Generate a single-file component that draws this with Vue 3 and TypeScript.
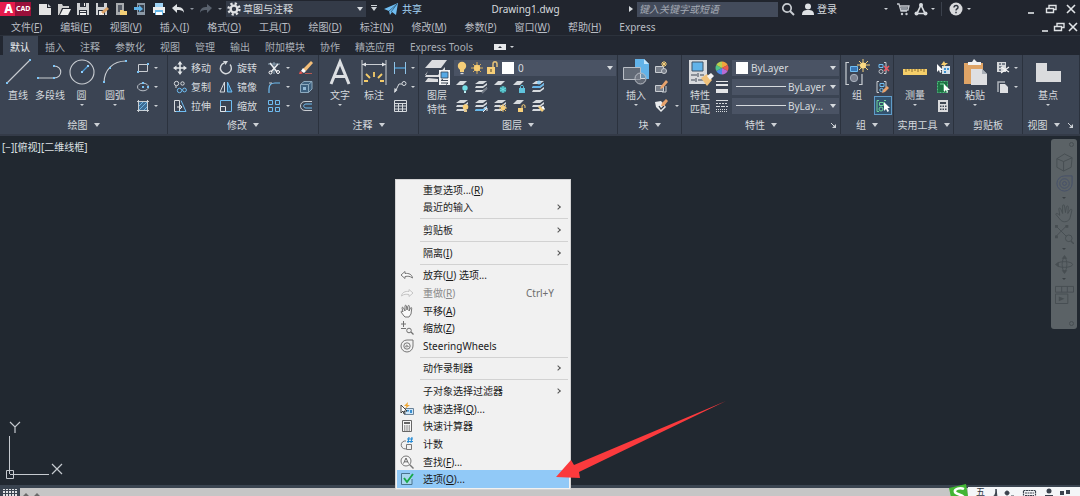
<script setup lang="ts">
import { h, ref } from 'vue'

interface MenuName { label: string; key?: string }
interface ContextItem {
  label?: string
  key?: string
  after?: string
  icon?: string
  sub?: boolean
  shortcut?: string
  disabled?: boolean
  active?: boolean
  sep?: boolean
}

const Ic = (props: { n: string }) =>
  h('svg', { class: 'ic', 'aria-hidden': 'true' }, [h('use', { href: '#i-' + props.n })])
Ic.props = ['n']

const menus: MenuName[] = [
  { label: '文件', key: 'F' }, { label: '编辑', key: 'E' }, { label: '视图', key: 'V' },
  { label: '插入', key: 'I' }, { label: '格式', key: 'O' }, { label: '工具', key: 'T' },
  { label: '绘图', key: 'D' }, { label: '标注', key: 'N' }, { label: '修改', key: 'M' },
  { label: '参数', key: 'P' }, { label: '窗口', key: 'W' }, { label: '帮助', key: 'H' },
  { label: 'Express' },
]
const tabs = ['默认', '插入', '注释', '参数化', '视图', '管理', '输出', '附加模块', '协作', '精选应用', 'Express Tools']
const activeTab = ref('默认')
const keyword = ref('')

const quick = [
  { n: 'new', t: '新建' }, { n: 'open', t: '打开' }, { n: 'save', t: '保存' }, { n: 'saveas', t: '另存为' },
  { n: 'webopen', t: '从 Web 打开' }, { n: 'websave', t: '保存到 Web' }, { n: 'print', t: '打印' },
]
const layerTools = ['layoff', 'layiso', 'layfrz', 'laylck', 'laycur', 'layon', 'layuniso', 'laythw', 'layulk', 'laymch']

const items: ContextItem[] = [
  { label: '重复选项...', key: 'R' },
  { label: '最近的输入', sub: true },
  { sep: true },
  { label: '剪贴板', sub: true },
  { sep: true },
  { label: '隔离', key: 'I', sub: true },
  { sep: true },
  { label: '放弃', key: 'U', after: ' 选项...', icon: 'm-undo' },
  { label: '重做', key: 'R', icon: 'm-redo', shortcut: 'Ctrl+Y', disabled: true },
  { label: '平移', key: 'A', icon: 'm-pan' },
  { label: '缩放', key: 'Z', icon: 'm-zoom' },
  { label: 'SteeringWheels', icon: 'm-wheel' },
  { sep: true },
  { label: '动作录制器', sub: true },
  { sep: true },
  { label: '子对象选择过滤器', sub: true },
  { label: '快速选择', key: 'Q', after: '...', icon: 'm-qsel' },
  { label: '快速计算器', icon: 'm-calc' },
  { label: '计数', icon: 'm-count' },
  { label: '查找', key: 'F', after: '...', icon: 'm-find' },
  { label: '选项', key: 'O', after: '...', icon: 'm-opt', active: true },
]
</script>

<template>
  <div class="cad">
    <svg class="sprite" aria-hidden="true">
      <symbol id="i-new" viewBox="0 0 14 14"><path d="M1 2h8v4h4v7H1z" fill="#e4e4e4" /><path d="M10 2l3 3h-3z" fill="#c9cdd2" /></symbol>
      <symbol id="i-open" viewBox="0 0 14 14"><path d="M1 13V2h4l1 2h6v2H5l-3 7z" fill="#cfcfcf" /><path d="M6 7h8l-3 6H3z" fill="#eee" /></symbol>
      <symbol id="i-save" viewBox="0 0 14 14"><path d="M1 1h12v12H1z" fill="#cfd1d4" /><path d="M4 1h6v4H4zM3 8h8v5H3z" fill="#2b303a" /><path d="M8 1h1v3H8zM4 9h6v1H4zM4 11h6v2H4z" fill="#f0f0f0" /></symbol>
      <symbol id="i-saveas" viewBox="0 0 14 14"><path d="M1 1h11v12H1z" fill="#cfd1d4" /><path d="M3 1h6v4H3zM3 8h7v5H3z" fill="#2b303a" /><path d="M4 9h5v4H4z" fill="#eee" /><path d="M5 13l1-3 6-5 2 2-6 5z" fill="#dca368" /><path d="M5 13l1-3 2 2z" fill="#fff" /></symbol>
      <symbol id="i-webopen" viewBox="0 0 14 14"><path d="M2 1h8v12H2z" fill="#a9acb0" /><path d="M4 3h4v7H4z" fill="#555b66" /><path d="M6 8h3l1 1h3v4H6z" fill="#f3cf77" /></symbol>
      <symbol id="i-websave" viewBox="0 0 14 14"><path d="M4 1h8v12H4z" fill="#8b98a5" /><path d="M5 3h6v7H5z" fill="#38414e" /><path d="M1 5h5V3l4 4-4 3V8H1z" fill="#5fb3ea" /></symbol>
      <symbol id="i-print" viewBox="0 0 14 14"><path d="M3 1h8v4H3z" fill="#9fd3f5" /><path d="M1 5h12v6H1z" fill="#eee" /><path d="M3 8h8v5H3z" fill="#67b7e8" /><path d="M4 10h6v3H4z" fill="#fff" /></symbol>
      <symbol id="i-undo" viewBox="0 0 14 14"><path d="M1 6l5-4v3c4 0 7 1 7 6-1-3-4-3-7-3v3z" fill="#dfe2e5" /></symbol>
      <symbol id="i-redo" viewBox="0 0 14 14"><path d="M13 6L8 2v3c-4 0-7 1-7 6 1-3 4-3 7-3v3z" fill="#59616d" /></symbol>
      <symbol id="i-gear" viewBox="0 0 14 14"><circle cx="7" cy="7" r="5.500" fill="none" stroke="#e0e2e5" stroke-width="2.400" stroke-dasharray="2.200 2.120" /><circle cx="7" cy="7" r="3.400" fill="none" stroke="#e0e2e5" stroke-width="2.400" /></symbol>
      <symbol id="i-plane" viewBox="0 0 14 14"><path d="M0 7L14 1l-2 12-4-3-2 3-1-4z" fill="#6fbdf2" /><path d="M5 9l8-7-6 8" fill="none" stroke="#2a5878" stroke-width=".8" /></symbol>
      <symbol id="i-search" viewBox="0 0 14 14"><circle cx="6" cy="6" r="4.200" fill="none" stroke="#c9cdd2" stroke-width="1.700" /><path d="M9 9l4 4" stroke="#c9cdd2" stroke-width="2" /></symbol>
      <symbol id="i-user" viewBox="0 0 14 14"><circle cx="7" cy="4.500" r="3" fill="#dfe2e5" /><path d="M1 13c0-4 2-5 6-5s6 1 6 5z" fill="#dfe2e5" /></symbol>
      <symbol id="i-cart" viewBox="0 0 14 14"><path d="M1 2h2l2 7h6M4 4h9l-1 4H5" fill="none" stroke="#c5c9cf" stroke-width="1.300" /><path d="M5 5h7l-1 3H5z" fill="#8c929b" /><circle cx="6" cy="12" r="1.200" fill="#c5c9cf" /><circle cx="10.500" cy="12" r="1.200" fill="#c5c9cf" /></symbol>
      <symbol id="i-adsk" viewBox="0 0 14 14"><path d="M7 3L3 11.500h8z" fill="none" stroke="#d6dade" stroke-width="1.700" /><circle cx="7" cy="3" r="2" fill="#d6dade" /><circle cx="2.500" cy="11.500" r="2" fill="#d6dade" /><circle cx="11.500" cy="11.500" r="2" fill="#d6dade" /></symbol>
      <symbol id="i-help" viewBox="0 0 14 14"><circle cx="7" cy="7" r="6.500" fill="#d9dadd" /><path d="M5 5.500c0-3 4.500-2.500 4 0C8.700 7 7 6.800 7 8.500M7 9.800v1.500" fill="none" stroke="#2c323c" stroke-width="1.400" /></symbol>
      <symbol id="i-min" viewBox="0 0 12 12"><path d="M3 10h6" stroke="#e2e5e8" stroke-width="1.600" /></symbol>
      <symbol id="i-restore" viewBox="0 0 12 12"><path d="M1.500 5.500h7v4h-7zM4 5V2.500h7v4H9" fill="none" stroke="#dfe2e5" stroke-width="1.400" /></symbol>
      <symbol id="i-close" viewBox="0 0 12 12"><path d="M2 2l8 8M10 2l-8 8" stroke="#e2e5e8" stroke-width="1.600" /></symbol>

      <symbol id="i-line" viewBox="0 0 28 28"><path d="M3 25L26 2" stroke="#c9cdd2" stroke-width="1.100" /><path d="M2 24h2v2H2zM25 1h2v2h-2z" fill="#7cc4f5" /></symbol>
      <symbol id="i-pline" viewBox="0 0 28 28"><path d="M2 20h16c9 0 9-12 0-12" fill="none" stroke="#c9cdd2" stroke-width="1.100" /><path d="M1 19h2v2H1zM17 19h2v2h-2zM17 7h2v2h-2z" fill="#7cc4f5" /></symbol>
      <symbol id="i-circle" viewBox="0 0 28 28"><circle cx="14" cy="14" r="12" fill="none" stroke="#c9cdd2" stroke-width="1.100" /><path d="M14 14l6-6" stroke="#4b9ad6" stroke-width="1.300" /><path d="M13 13h2v2h-2zM19 7h2v2h-2z" fill="#8fd0ff" /></symbol>
      <symbol id="i-arc" viewBox="0 0 28 28"><path d="M3 25C3 12 12 3 25 3" fill="none" stroke="#c9cdd2" stroke-width="1.100" /><path d="M2 23h2v2H2zM8 9h2v2H8zM24 2h2v2h-2z" fill="#7cc4f5" /></symbol>
      <symbol id="i-rect" viewBox="0 0 14 14"><path d="M2.500 3.500h9v7h-9z" fill="none" stroke="#c9cdd2" /><path d="M1 10h2v2H1zM11 2h2v2h-2z" fill="#7cc4f5" /></symbol>
      <symbol id="i-ellipse" viewBox="0 0 14 14"><ellipse cx="7" cy="7" rx="5.500" ry="3.800" fill="none" stroke="#b9bfc7" /><path d="M6 6h2v2H6zM6 2h2v2H6zM11 6h2v2h-2z" fill="#7cc4f5" /></symbol>
      <symbol id="i-hatch" viewBox="0 0 14 14"><path d="M3 3h9v9H3z" fill="#3c6c94" /><path d="M3 7l4-4M3 11l8-8M7 12l5-5" stroke="#7cc4f5" stroke-width=".800" /><path d="M1 2.500h12M1 11.500h12M2.500 1v12M11.500 1v12" stroke="#d6dade" stroke-width=".900" /></symbol>
      <symbol id="i-move" viewBox="0 0 14 14"><path d="M7 2v10M2 7h10" stroke="#e4e7ea" stroke-width="1.500" /><path d="M7 0l2.500 3.500h-5zM7 14l2.500-3.500h-5zM0 7l3.500-2.500v5zM14 7l-3.500-2.500v5z" fill="#e4e7ea" /></symbol>
      <symbol id="i-copy" viewBox="0 0 14 14"><circle cx="3.500" cy="3.500" r="2.200" fill="none" stroke="#d6dade" /><circle cx="9.500" cy="3.500" r="1.700" fill="none" stroke="#d6dade" /><circle cx="6.500" cy="10.500" r="2.200" fill="none" stroke="#6fbdf2" /><circle cx="11.500" cy="10" r="1.900" fill="none" stroke="#6fbdf2" /><path d="M3 6v2" stroke="#d6dade" /></symbol>
      <symbol id="i-stretch" viewBox="0 0 14 14"><path d="M1.500 1.500h5v11h-5z" fill="none" stroke="#d6dade" /><path d="M8 1.500l5 11H3" fill="none" stroke="#6fbdf2" /><path d="M4 8h5M7 6l2 2-2 2" fill="none" stroke="#e9ecef" /></symbol>
      <symbol id="i-rotate" viewBox="0 0 14 14"><path d="M5 2a5.500 5.500 0 1 0 6 1.500" fill="none" stroke="#d6dade" stroke-width="1.400" /><path d="M4 0h5L6.500 4z" fill="#d6dade" /></symbol>
      <symbol id="i-mirror" viewBox="0 0 14 14"><path d="M5.500 2v10H1z" fill="none" stroke="#d6dade" /><path d="M8.500 2v10H13z" fill="#2f6f9d" stroke="#6fbdf2" /></symbol>
      <symbol id="i-scale" viewBox="0 0 14 14"><path d="M1.500 1.500h11v11h-11z" fill="none" stroke="#6fbdf2" /><path d="M1.500 7.500h5v5h-5z" fill="none" stroke="#e0e3e6" /></symbol>
      <symbol id="i-trim" viewBox="0 0 14 14"><path d="M1 3h12M7 1v12" stroke="#8ba2b5" /><path d="M3 2l7 9M11 3L4 11" stroke="#e9ecef" stroke-width="1.500" /><circle cx="3.500" cy="11.500" r="1.500" fill="none" stroke="#fff" /><circle cx="11" cy="11" r="1.500" fill="none" stroke="#fff" /></symbol>
      <symbol id="i-fillet" viewBox="0 0 14 14"><path d="M2 13V9c0-4 2-6 6-6h5" fill="none" stroke="#6fbdf2" stroke-width="1.200" /><path d="M2 3h3" stroke="#c9cdd2" /></symbol>
      <symbol id="i-array" viewBox="0 0 14 14"><path d="M1.500 1.500h4v4h-4zM8.500 1.500h4v4h-4zM1.500 8.500h4v4h-4zM8.500 8.500h4v4h-4z" fill="none" stroke="#6fbdf2" /></symbol>
      <symbol id="i-erase" viewBox="0 0 14 14"><path d="M12 0l2 2-7 8-3-2z" fill="#f2bd78" /><path d="M4 7l3 3-2 2-3-2z" fill="#fff" /><path d="M1 10l3 2-2 1H0z" fill="#e5534e" /><path d="M6 12.500h7" stroke="#b65952" /></symbol>
      <symbol id="i-explode" viewBox="0 0 14 14"><path d="M1.500 4.500h8v8h-8zM1.500 4.500L5 1.500h8v7.500l-3.500 3.500M9.500 4.500L13 1.500" fill="#3d607e" stroke="#8da9be" /><path d="M4 7h3v3H4z" fill="#91b8d6" /></symbol>
      <symbol id="i-offset" viewBox="0 0 14 14"><path d="M13 2.500H6c-6 0-6 9 0 9h7" fill="none" stroke="#c9cdd2" /><path d="M13 5H7C4 5 4 9 7 9h6" fill="none" stroke="#6fbdf2" /></symbol>
      <symbol id="i-text" viewBox="0 0 28 28"><path d="M5 26L14 4l9 22M8 18.500h12" fill="none" stroke="#dcdfe2" stroke-width="3" /></symbol>
      <symbol id="i-dim" viewBox="0 0 28 28"><path d="M2 2v25M26 2v25M2 6.500h24" stroke="#c9cdd2" fill="none" /><path d="M2 6.500l4-2v4zM26 6.500l-4-2v4z" fill="#dfe2e5" /><path d="M14 19v-5M10 20l-4-4M18 20l4-4M8 23H4M20 23h4" stroke="#f5cc69" stroke-width="1.800" /></symbol>
      <symbol id="i-dimlin" viewBox="0 0 14 14"><path d="M1.500 1v12M12.500 1v12" stroke="#8fc4e8" /><path d="M2 7h10" stroke="#4f9cd3" stroke-width="1.400" /></symbol>
      <symbol id="i-leader" viewBox="0 0 14 14"><circle cx="11" cy="3.500" r="2" fill="none" stroke="#d6dade" /><path d="M9 4H6l-4 8" fill="none" stroke="#d6dade" /><path d="M1 13l.5-5 3 2z" fill="#d6dade" /></symbol>
      <symbol id="i-table" viewBox="0 0 14 14"><path d="M1.500 1.500h12v11h-12zM1.500 4.500h12M1.500 7h12M1.500 10h12M5.500 4v9M9.500 4v9" fill="none" stroke="#d6dade" /></symbol>
      <symbol id="i-layers" viewBox="0 0 28 28"><path d="M9 2h15l-6 8H2zM5 13l-3 4h13l7-8v3l-6 7H2zM5 20l-3 4h13v-3z" fill="#dcdde0" /><path d="M16 12h11v15H16z" fill="#f0f2f4" /><path d="M18 14h7v6h-7z" fill="#55a9e5" stroke="#33485c" stroke-width=".8" /><path d="M18 22.500h7M18 25h7M20 21l-2 1.500M23 26.500l2-1.500" stroke="#3b4654" /></symbol>
      <symbol id="i-bulb" viewBox="0 0 14 14"><circle cx="7" cy="5" r="4.200" fill="#f7cf79" /><path d="M5 8h4v3H5z" fill="#f7cf79" /><path d="M5.500 12.500h3" stroke="#d7d9dc" stroke-width="1.300" /></symbol>
      <symbol id="i-sun" viewBox="0 0 14 14"><path d="M7 1v12M1 7h12M3 3l8 8M11 3l-8 8" stroke="#e4b65b" stroke-width=".900" /><circle cx="7" cy="7" r="3.200" fill="#f8ce73" /></symbol>
      <symbol id="i-unlock" viewBox="0 0 14 14"><path d="M2 6h8v7H2z" fill="#f7cf79" /><path d="M8 6V3c0-3 4-3 4 0v3" fill="none" stroke="#e3c078" stroke-width="1.500" /><path d="M6 8v3" stroke="#49412e" /></symbol>
      <symbol id="i-sheet" viewBox="0 0 14 14"><path d="M5 1h7L8 5H1z" fill="#d6dade" /></symbol>
      <symbol id="i-sheets" viewBox="0 0 14 14"><path d="M5 1h8L9 4H1zM2 6h7l4-3v2L9 8H1zM2 10h7l4-3v2l-4 3H1z" fill="#d6dade" /></symbol>
      <symbol id="i-layoff" viewBox="0 0 14 14"><use href="#i-sheet" /><circle cx="10" cy="8" r="2.700" fill="#72dde5" /><path d="M9 11h2v2H9z" fill="#bdeef0" /></symbol>
      <symbol id="i-layiso" viewBox="0 0 14 14"><use href="#i-sheets" /><path d="M8 13l5-5" stroke="#6d7581" stroke-width="2" /></symbol>
      <symbol id="i-layfrz" viewBox="0 0 14 14"><use href="#i-sheet" /><circle cx="10" cy="9.500" r="3.300" fill="#3f9fa8" /><path d="M10 6v7M7 8l6 3M13 8l-6 3" stroke="#6fe0e6" stroke-width=".9" /></symbol>
      <symbol id="i-laylck" viewBox="0 0 14 14"><use href="#i-sheet" /><path d="M7 8h6v5H7z" fill="#5fc3dd" /><path d="M8.500 8V6.500c0-1.500 3-1.500 3 0V8" fill="none" stroke="#5fc3dd" /></symbol>
      <symbol id="i-laycur" viewBox="0 0 14 14"><use href="#i-sheets" /><path d="M2 6h7l4-3v2L9 8H1z" fill="#65b6ea" /><circle cx="8" cy="2.500" r="2" fill="#8fcdf3" /></symbol>
      <symbol id="i-layon" viewBox="0 0 14 14"><use href="#i-sheets" /><circle cx="10.500" cy="8" r="2.800" fill="#f7cf79" /><path d="M9 11h3v2H9z" fill="#e5c98f" /></symbol>
      <symbol id="i-layuniso" viewBox="0 0 14 14"><use href="#i-sheets" /><path d="M2 10h7l4-3v2l-4 3H1z" fill="#65b6ea" /><path d="M9 13l4-4M10 9h3v3" stroke="#f0f2f4" fill="none" /></symbol>
      <symbol id="i-laythw" viewBox="0 0 14 14"><use href="#i-sheets" /><path d="M10 5v8M6 9h8M7 6l6 6M13 6l-6 6" stroke="#e4b65b" /><circle cx="10" cy="9" r="2.300" fill="#f7cf79" /></symbol>
      <symbol id="i-layulk" viewBox="0 0 14 14"><use href="#i-sheet" /><path d="M6 9h5v4H6z" fill="#f7cf79" /><path d="M10 9V7c0-1.800 3-1.800 3 0v2" fill="none" stroke="#f7cf79" /></symbol>
      <symbol id="i-laymch" viewBox="0 0 14 14"><use href="#i-sheets" /><path d="M7 8l2-1 4 4-2 2z" fill="#f7cf79" /><path d="M10 8l2-1 2 3-1 1z" fill="#fff" /></symbol>
      <symbol id="i-insert" viewBox="0 0 28 28"><path d="M13 1h9l5 5v15H13z" fill="#62b3e9" /><path d="M22 1v5h5z" fill="#c4e5fb" /><path d="M1.500 9.500h17v12h-17z" fill="#626a76" stroke="#b9bec5" /><circle cx="18.500" cy="20.500" r="5.500" fill="#7b818a" fill-opacity=".6" stroke="#b9bec5" /><path d="M18.500 20.500V16M18.500 20.500H23" stroke="#d2d5d9" /></symbol>
      <symbol id="i-bcreate" viewBox="0 0 14 14"><path d="M1.500 5.500h8v6h-8z" fill="#777e89" stroke="#c9cdd2" /><circle cx="10" cy="10" r="2.500" fill="#777e89" stroke="#c9cdd2" /><path d="M10 0v6M7 3h6M8 1l4 4M12 1L8 5" stroke="#f7cf79" /></symbol>
      <symbol id="i-bedit" viewBox="0 0 14 14"><path d="M1.500 5.500h8v6h-8z" fill="#777e89" stroke="#c9cdd2" /><path d="M12 6v6H8" fill="none" stroke="#c9cdd2" /><path d="M6 9l1-3 5-6 2 2-5 6z" fill="#e8a36c" /></symbol>
      <symbol id="i-battr" viewBox="0 0 14 14"><path d="M1 3l6-1 5 6-5 5-5-5z" fill="#e9ebed" /><path d="M5 7l2 3 3-3" stroke="#333b48" fill="none" stroke-width="1.300" /><path d="M7 7l1-3 4-4 2 2-4 5z" fill="#e8a36c" /></symbol>
      <symbol id="i-match" viewBox="0 0 28 28"><path d="M3 2h18v24H3z" fill="#d8dadd" /><path d="M6 4h11v9H6z" fill="#62b3e9" stroke="#3c5368" /><path d="M5 17h6M14 17h4M5 22h4M12 22h6" stroke="#3c4654" stroke-width="1.200" /><path d="M12 15v4M10 20v4" stroke="#3c4654" /><path d="M15 20l6-4 5 6-5 6z" fill="#f0c27b" /><path d="M21 18l4-3 3 3-4 4z" fill="#f2f2f2" /></symbol>
      <symbol id="i-wheel" viewBox="0 0 14 14"><path d="M7 7V.500A6.500 6.500 0 0 1 12.700 4z" fill="#f1a43c" /><path d="M7 7l5.700-3a6.500 6.500 0 0 1 0 6z" fill="#ea5b4f" /><path d="M7 7l5.700 3A6.500 6.500 0 0 1 7 13.500z" fill="#b76bd5" /><path d="M7 7v6.500A6.500 6.500 0 0 1 1.300 10z" fill="#4a8ae6" /><path d="M7 7l-5.700 3a6.500 6.500 0 0 1 0-6z" fill="#51c38a" /><path d="M7 7L1.300 4A6.500 6.500 0 0 1 7 .500z" fill="#b9d04f" /></symbol>
      <symbol id="i-weight" viewBox="0 0 14 14"><path d="M1 1h12v1H1zM1 4h12v2H1zM1 9h12v4H1z" fill="#e4e6e8" /></symbol>
      <symbol id="i-ltype" viewBox="0 0 14 14"><path d="M1 1.500h12" stroke="#d6dade" /><path d="M1 4.500h12" stroke="#d6dade" stroke-dasharray="2 1" /><path d="M1 7.500h12" stroke="#d6dade" stroke-dasharray="4 1" /><path d="M1 10.500h12M1 12.500h12" stroke="#d6dade" stroke-dasharray="1 1" /></symbol>
      <symbol id="i-group" viewBox="0 0 28 28"><path d="M6 4.500H3v22h3M16 26.500h3V16" fill="none" stroke="#c9cdd2" stroke-width="1.200" /><path d="M7.500 8.500h7v5h-7z" fill="#3a77b5" stroke="#6fbdf2" /><circle cx="11" cy="20" r="3.700" fill="#7b818f" stroke="#a8b0bc" /><path d="M20 1v13M14 7h13M16 3l9 9M25 3l-9 9" stroke="#f7cf79" /><circle cx="20" cy="7.500" r="3" fill="#fbd983" /></symbol>
      <symbol id="i-ungroup" viewBox="0 0 14 14"><path d="M8 1.500h2v11H8" fill="none" stroke="#c9cdd2" /><path d="M3 3.500h4v3H3z" fill="none" stroke="#6fbdf2" /><circle cx="5" cy="10.500" r="2" fill="none" stroke="#b9bec5" /><path d="M8 5l5 5M13 5l-5 5" stroke="#ee5862" stroke-width="1.500" /></symbol>
      <symbol id="i-gedit" viewBox="0 0 14 14"><path d="M3 1.500H1v11h2M8 1.500h2v6" fill="none" stroke="#c9cdd2" /><path d="M4 3.500h4v3H4z" fill="none" stroke="#6fbdf2" /><circle cx="5.500" cy="10" r="1.700" fill="none" stroke="#6fbdf2" /><path d="M6 13l1-3 4-4 2 2-4 4z" fill="#e8a36c" /></symbol>
      <symbol id="i-gsel" viewBox="0 0 14 14"><path d="M3 1.500H1v11h2M8 1.500h2" fill="none" stroke="#6fd39a" /><path d="M3.500 3.500h4v3h-4z" fill="none" stroke="#6fd39a" /><circle cx="5" cy="10" r="2" fill="none" stroke="#6fd39a" /><path d="M8 3v9l2-2 1.500 3 1.500-1-1.500-3H14z" fill="#fff" /></symbol>
      <symbol id="i-measure" viewBox="0 0 28 28"><path d="M2 11h24v6H2z" fill="#f6cf69" /><path d="M5 11v3M8 11v2M11 11v3M14 11v2M17 11v3M20 11v2M23 11v3" stroke="#8d6f30" /></symbol>
      <symbol id="i-qsel" viewBox="0 0 14 14"><path d="M6 5h8v8H6z" fill="#d7e2eb" /><path d="M8 7h2v2H8zM11 7h2v2h-2zM8 10h2v2H8z" fill="#3b91cf" /><path d="M8 0l-3 4h3L6 7l6-5H9z" fill="#f8cf70" /><path d="M1 3v8l2-2 1 3 1.500-1-1-2H7z" fill="#fff" /></symbol>
      <symbol id="i-selall" viewBox="0 0 14 14"><path d="M1.500 1.500h10v11h-10z" fill="#1e7143" stroke="#49c77c" stroke-dasharray="2 1" /><path d="M4 4h4v7" fill="none" stroke="#76dda0" /><path d="M8 4v8l2-2 1 3 1-1-1-2h3z" fill="#fff" /></symbol>
      <symbol id="i-calc" viewBox="0 0 14 14"><path d="M2 1h10v12H2z" fill="#d9dadc" /><path d="M4 3h6v2H4zM4 6.500h1.500V8H4zM6.500 6.500H8V8H6.500zM9 6.500h1.500V8H9zM4 9.500h1.500V11H4zM6.500 9.500H8V11H6.500zM9 9.500h1.500V11H9z" fill="#3f4752" /></symbol>
      <symbol id="i-paste" viewBox="0 0 28 28"><path d="M3 5h19v21H3z" fill="#dfa466" /><path d="M7 7V4h4l2-3 3 3h4v3z" fill="#f2f2f2" /><path d="M10 11h11l5 5v11H10z" fill="#dedfe2" /><path d="M21 11v5h5z" fill="#a9afb8" /></symbol>
      <symbol id="i-cut" viewBox="0 0 14 14"><path d="M1 1h9v10H1z" fill="#d6d8db" /><path d="M3 3h2M6 3h3M3 6h3M3 9h2" stroke="#566070" stroke-width="1.300" /><path d="M5 6l8 5M13 6l-8 6" stroke="#f5f5f5" stroke-width="1.200" /></symbol>
      <symbol id="i-dup" viewBox="0 0 14 14"><path d="M2 12V2h7" fill="none" stroke="#aeb3bb" stroke-width="1.500" /><path d="M4 4h5l3 3v6H4z" fill="#dfe0e3" /></symbol>
      <symbol id="i-base" viewBox="0 0 28 28"><path d="M2 5h11v8h14v11H2z" fill="#dadbdd" /></symbol>
      <symbol id="i-launch" viewBox="0 0 8 8"><path d="M1 2l4 4" stroke="#cdd1d6" /><path d="M6 3v4H2z" fill="#cdd1d6" /></symbol>

      <symbol id="i-m-undo" viewBox="0 0 14 14"><path d="M1 7l4-3.500v2c4-.5 7 1 7.500 4.500C10 8 8 8 5 8.500v2z" fill="#fafafa" stroke="#777" /></symbol>
      <symbol id="i-m-redo" viewBox="0 0 14 14"><path d="M13 7L9 3.500v2C5 5 2 6.500 1.500 10 4 8 6 8 9 8.500v2z" fill="#f6f6f6" stroke="#c5c5c5" /></symbol>
      <symbol id="i-m-pan" viewBox="0 0 14 14"><path d="M4 12L1 8c0-1 1-1 2 0L2 4c0-1 1-1 1.500 0L5 7V2c0-1 1.200-1 1.400 0L7 6l1-4c.3-1 1.500-.500 1.400.500L9 7l1.500-3c.5-1 1.500-.300 1.200.700L11 10l-2 3H5z" fill="#fafafa" stroke="#666" stroke-width=".900" /></symbol>
      <symbol id="i-m-zoom" viewBox="0 0 14 14"><path d="M3.500 0v6M1 3h5M1 7.500h5" stroke="#707070" /><circle cx="9" cy="9.500" r="2.300" fill="none" stroke="#707070" /><path d="M11 11l2.500 2.500" stroke="#707070" stroke-width="1.300" /></symbol>
      <symbol id="i-m-wheel" viewBox="0 0 14 14"><path d="M7 1h6v6a6 6 0 1 1-6-6z" fill="none" stroke="#777" /><circle cx="7" cy="7" r="3.200" fill="none" stroke="#777" /><path d="M5.500 8l1-2 2 1.500z" fill="none" stroke="#777" stroke-width=".800" /></symbol>
      <symbol id="i-m-qsel" viewBox="0 0 14 14"><path d="M4.500 6.500h9v6h-9z" fill="#cfe6f8" stroke="#6a8298" /><path d="M6 8h3v1.500H6zM10 8h2v3h-2z" fill="#3a8fd0" /><path d="M8 0L4 4h2.500L5 7l5-4H7.500z" fill="#efa735" /><path d="M1 3v8l2-2 1 3 1.200-.5-1-2.500H7z" fill="#fff" stroke="#333" stroke-width=".900" /></symbol>
      <symbol id="i-m-calc" viewBox="0 0 14 14"><path d="M2.500 1.500h9v11h-9z" fill="#f7f7f7" stroke="#666" /><path d="M4 3h6v2H4z" fill="#666" /><path d="M4 7h6M4 9h6M4 11h6" stroke="#555" stroke-width="1.200" stroke-dasharray="1.400 .900" /></symbol>
      <symbol id="i-m-count" viewBox="0 0 14 14"><path d="M6 4a4 4 0 1 0 1 7.500M6.500 7.500h5v5h-5z" fill="none" stroke="#777" /><path d="M9 0L8 6M12 0l-1 6M7 2h6M7 4.500h6" stroke="#258bd5" stroke-width="1.100" /></symbol>
      <symbol id="i-m-find" viewBox="0 0 14 14"><circle cx="6" cy="6" r="5" fill="#f7f7f7" stroke="#777" /><path d="M9.500 9.500l4 4" stroke="#777" stroke-width="1.400" /><path d="M3.500 8.500L6 3l2.500 5.500M4.500 6.800h3" fill="none" stroke="#666" /></symbol>
      <symbol id="i-m-opt" viewBox="0 0 14 14"><path d="M12 7v5.500H1.500v-11H10" fill="#a9d6ee" stroke="#49738c" /><path d="M4 6l3 4 6-8" fill="none" stroke="#19a84a" stroke-width="1.900" /></symbol>

      <symbol id="i-cube" viewBox="0 0 20 20"><path d="M10 1l8 4-1 10-8 4-7-4V6zM2 6l7 3 9-4M9 9v10" fill="none" stroke="#474e52" /></symbol>
      <symbol id="i-nwheel" viewBox="0 0 20 20"><path d="M10 2h8v8a8 8 0 1 1-8-8z" fill="none" stroke="#465069" /><circle cx="10" cy="10" r="5" fill="none" stroke="#465069" /><circle cx="10" cy="10" r="2" fill="none" stroke="#465069" /></symbol>
      <symbol id="i-nhand" viewBox="0 0 20 20"><path d="M6 17L1 11c0-2 2-1 4 1L4 5c0-1 1.500-1 2 0l2 5V2c0-1.500 2-1.500 2 0l1 7 1-6c.5-1.500 2-1 2 0l-.5 7L16 6c.8-1 2-.5 1.700 1L16 14c-1 5-7 6-10 3z" fill="none" stroke="#474e52" /></symbol>
      <symbol id="i-nzoom" viewBox="0 0 20 20"><path d="M1 1l11 11M12 1L1 12" stroke="#474e52" /><path d="M0 0h3v3H0zM11 0h3v3h-3zM0 11h3v3H0z" fill="#474e52" /><circle cx="14.500" cy="14" r="3.500" fill="none" stroke="#474e52" /><path d="M17 17l3 3" stroke="#474e52" stroke-width="1.500" /></symbol>
      <symbol id="i-norbit" viewBox="0 0 20 20"><ellipse cx="10" cy="10" rx="8.500" ry="3" fill="none" stroke="#474e52" /><ellipse cx="10" cy="10" rx="2.500" ry="7" fill="none" stroke="#474e52" /><path d="M10 0l3 4H7zM10 20l3-4H7zM0 10l4-3v6z" fill="#474e52" /></symbol>
      <symbol id="i-nmotion" viewBox="0 0 20 20"><path d="M.500 1.500h19v6H.500zM7 1.500v6M13 1.500v6M.500 9.500h13v10H.500z" fill="none" stroke="#474e52" /><path d="M4 12l6 2.500L4 17z" fill="#474e52" /></symbol>
    </svg>

    <header class="title">
      <button class="logo" aria-label="AutoCAD"><b>A</b><span>CAD</span></button>
      <div class="quick">
        <button v-for="q in quick" :key="q.n" :aria-label="q.t"><Ic :n="q.n" /></button>
      </div>
      <div class="history">
        <button aria-label="放弃"><Ic n="undo" /></button><i class="caret dim" />
        <button aria-label="重做"><Ic n="redo" /></button><i class="caret dim" />
      </div>
      <label class="workspace drop">
        <Ic n="gear" />
        <select aria-label="工作空间"><option>草图与注释</option></select>
      </label>
      <button class="custom" aria-label="自定义快速访问工具栏"><i class="caret wide" /></button>
      <button class="share"><Ic n="plane" />共享</button>
      <h1>Drawing1.dwg</h1>
      <div class="finder">
        <i class="arrow-right" />
        <input v-model="keyword" type="text" aria-label="搜索" placeholder="键入关键字或短语">
        <button aria-label="搜索"><Ic n="search" /></button>
      </div>
      <button class="login"><Ic n="user" />登录<i class="caret" /></button>
      <div class="services">
        <button aria-label="应用商店"><Ic n="cart" /></button>
        <button aria-label="Autodesk"><Ic n="adsk" /><i class="caret" /></button>
        <button class="help" aria-label="帮助"><Ic n="help" /><i class="caret" /></button>
      </div>
      <div class="win">
        <button aria-label="最小化"><Ic n="min" /></button>
        <button aria-label="还原"><Ic n="restore" /></button>
        <button aria-label="关闭"><Ic n="close" /></button>
      </div>
    </header>

    <nav class="menus" aria-label="菜单栏">
      <button v-for="m in menus" :key="m.label">{{ m.label }}<template v-if="m.key">(<u>{{ m.key }}</u>)</template></button>
      <div class="win doc">
        <button aria-label="最小化图形"><Ic n="min" /></button>
        <button aria-label="还原图形"><Ic n="restore" /></button>
        <button aria-label="关闭图形"><Ic n="close" /></button>
      </div>
    </nav>

    <nav class="tabs" aria-label="功能区">
      <button v-for="t in tabs" :key="t" :class="{ on: t === activeTab }" @click="activeTab = t">{{ t }}</button>
      <button class="fold" aria-label="最小化功能区"><span class="chip"><i /></span><i class="caret" /></button>
    </nav>

    <section class="ribbon">
      <div class="panel">
        <div class="tools draw">
          <button class="big"><Ic n="line" />直线</button>
          <button class="big"><Ic n="pline" />多段线</button>
          <button class="big"><Ic n="circle" />圆<i class="caret" /></button>
          <button class="big"><Ic n="arc" />圆弧<i class="caret" /></button>
          <div class="stack">
            <button aria-label="矩形"><Ic n="rect" /><i class="caret" /></button>
            <button aria-label="椭圆"><Ic n="ellipse" /><i class="caret" /></button>
            <button aria-label="图案填充"><Ic n="hatch" /><i class="caret" /></button>
          </div>
        </div>
        <button class="name">绘图<i class="caret wide" /></button>
      </div>

      <div class="panel">
        <div class="tools modify">
          <div class="stack">
            <button><Ic n="move" />移动</button>
            <button><Ic n="copy" />复制</button>
            <button><Ic n="stretch" />拉伸</button>
          </div>
          <div class="stack">
            <button><Ic n="rotate" />旋转</button>
            <button><Ic n="mirror" />镜像</button>
            <button><Ic n="scale" />缩放</button>
          </div>
          <div class="stack">
            <button aria-label="修剪"><Ic n="trim" /><i class="caret" /></button>
            <button aria-label="圆角"><Ic n="fillet" /><i class="caret" /></button>
            <button aria-label="阵列"><Ic n="array" /><i class="caret" /></button>
          </div>
          <div class="stack">
            <button aria-label="删除"><Ic n="erase" /></button>
            <button aria-label="分解"><Ic n="explode" /></button>
            <button aria-label="偏移"><Ic n="offset" /></button>
          </div>
        </div>
        <button class="name">修改<i class="caret wide" /></button>
      </div>

      <div class="panel">
        <div class="tools note">
          <button class="big"><Ic n="text" />文字<i class="caret" /></button>
          <button class="big"><Ic n="dim" />标注</button>
          <div class="stack">
            <button aria-label="线性"><Ic n="dimlin" /><i class="caret" /></button>
            <button aria-label="引线"><Ic n="leader" /><i class="caret" /></button>
            <button aria-label="表格"><Ic n="table" /></button>
          </div>
        </div>
        <button class="name">注释<i class="caret wide" /></button>
      </div>

      <div class="panel">
        <div class="tools layer">
          <button class="big"><Ic n="layers" />图层<br>特性</button>
          <div class="stack">
            <label class="drop field"><Ic n="bulb" /><Ic n="sun" /><Ic n="unlock" /><span class="swatch" />
              <select aria-label="图层"><option>0</option></select>
            </label>
            <div class="grid5">
              <button v-for="l in layerTools" :key="l" :aria-label="l"><Ic :n="l" /></button>
            </div>
          </div>
        </div>
        <button class="name">图层<i class="caret wide" /></button>
      </div>

      <div class="panel">
        <div class="tools block">
          <button class="big"><Ic n="insert" />插入<i class="caret" /></button>
          <div class="stack">
            <button aria-label="创建"><Ic n="bcreate" /></button>
            <button aria-label="编辑"><Ic n="bedit" /></button>
            <button aria-label="编辑属性"><Ic n="battr" /><i class="caret" /></button>
          </div>
        </div>
        <button class="name">块<i class="caret wide" /></button>
      </div>

      <div class="panel">
        <div class="tools props">
          <button class="big"><Ic n="match" />特性<br>匹配</button>
          <div class="stack">
            <div class="prop"><Ic n="wheel" /><label class="drop field"><span class="swatch" /><select aria-label="对象颜色"><option>ByLayer</option></select></label></div>
            <div class="prop"><Ic n="weight" /><label class="drop field"><span class="rule" /><select aria-label="线宽"><option>ByLayer</option></select></label></div>
            <div class="prop"><Ic n="ltype" /><label class="drop field"><span class="rule" /><select aria-label="线型"><option>ByLay...</option></select></label></div>
          </div>
        </div>
        <button class="name">特性<i class="caret wide" /></button>
        <button class="launch" aria-label="特性选项板"><Ic n="launch" /></button>
      </div>

      <div class="panel">
        <div class="tools group">
          <button class="big"><Ic n="group" />组</button>
          <div class="stack">
            <button aria-label="解除编组"><Ic n="ungroup" /></button>
            <button aria-label="组编辑"><Ic n="gedit" /></button>
            <button class="pressed" aria-label="启用组选择" aria-pressed="true"><Ic n="gsel" /></button>
          </div>
        </div>
        <button class="name">组<i class="caret wide" /></button>
      </div>

      <div class="panel">
        <div class="tools util">
          <button class="big"><Ic n="measure" />测量<i class="caret" /></button>
          <div class="stack">
            <button aria-label="快速选择"><Ic n="qsel" /></button>
            <button aria-label="全部选择"><Ic n="selall" /></button>
            <button aria-label="快速计算器"><Ic n="calc" /></button>
          </div>
        </div>
        <button class="name">实用工具<i class="caret wide" /></button>
      </div>

      <div class="panel">
        <div class="tools clip">
          <button class="big"><Ic n="paste" />粘贴<i class="caret" /></button>
          <div class="stack">
            <button aria-label="剪切"><Ic n="cut" /><i class="caret" /></button>
            <button aria-label="复制剪裁"><Ic n="dup" /><i class="caret" /></button>
          </div>
        </div>
        <button class="name">剪贴板</button>
      </div>

      <div class="panel">
        <div class="tools view">
          <button class="big"><Ic n="base" />基点<i class="caret" /></button>
        </div>
        <div class="names">
          <button class="name">视图<i class="caret wide" /></button>
          <button aria-label="视图选项"><Ic n="launch" /></button>
        </div>
      </div>
    </section>

    <main class="canvas">
      <div class="viewlabel"><button>[−]</button><button>[俯视]</button><button>[二维线框]</button></div>
      <aside class="navbar" aria-label="导航栏">
        <span class="dot" />
        <button aria-label="ViewCube"><Ic n="cube" /></button>
        <button aria-label="控制盘"><Ic n="nwheel" /><i class="caret" /></button>
        <button aria-label="平移"><Ic n="nhand" /></button>
        <button aria-label="范围缩放"><Ic n="nzoom" /><i class="caret" /></button>
        <button aria-label="动态观察"><Ic n="norbit" /><i class="caret" /></button>
        <button aria-label="ShowMotion"><Ic n="nmotion" /></button>
        <span class="dot end" />
      </aside>
      <svg class="ucs" width="66" height="62" viewBox="0 0 66 62" aria-hidden="true">
        <path d="M6.500 17v38M7 55.500h39M3.500 51.500h7v8h-7z" fill="none" stroke="#c6cacf" />
        <path d="M7 3l5 5 5-5M12 8v6M49 45l10 10M59 45L49 55" fill="none" stroke="#c6cacf" stroke-width="1.200" />
      </svg>
    </main>

    <footer class="command">
      <span class="grip" />
      <input type="text" aria-label="命令行">
      <svg class="marks" width="24" height="8" viewBox="0 0 24 8" aria-hidden="true"><path d="M3 8l3-3 3 3zM14 8l3-3 3 3z" fill="#6a6a6a" /></svg>
    </footer>

    <div class="ime" aria-label="输入法">
      <svg class="sogou" width="22" height="18" viewBox="0 0 22 18" aria-hidden="true">
        <path d="M1 4l17-4 3 18H4z" fill="#43b534" />
        <path d="M16 5C12 3 6 5 7 8s9 2 9 6-6 4-9 3" fill="none" stroke="#fff" stroke-width="2.500" />
      </svg>
      <span>五</span>
      <svg width="92" height="12" viewBox="0 0 92 12" aria-hidden="true">
        <path d="M11 2c0 6-2 8-5 8h6zM22 4a2 2 0 1 0 .1 0M26 9h3" fill="#3b424d" stroke="#3b424d" />
        <path d="M38.500 3.500h12v8h-12zM40 6h9M40 8.500h9" fill="none" stroke="#3b424d" stroke-width="1.200" stroke-dasharray="2 .500" />
        <circle cx="64" cy="4" r="2.500" fill="#3b424d" /><path d="M60 8h8v4h-8z" fill="#3b424d" />
        <path d="M75 4h4v4h-4zM81 3h4v4h-4zM75 10h4v2h-4zM81 9h4v3h-4z" fill="#3b424d" />
      </svg>
    </div>

    <div class="context" role="menu">
      <template v-for="(it, i) in items" :key="i">
        <hr v-if="it.sep">
        <button v-else role="menuitem" :class="{ active: it.active }" :disabled="it.disabled">
          <span class="gutter"><Ic v-if="it.icon" :n="it.icon" /></span>
          <span class="text">{{ it.label }}<template v-if="it.key">(<u>{{ it.key }}</u>)</template>{{ it.after }}</span>
          <span v-if="it.shortcut" class="short">{{ it.shortcut }}</span>
          <i v-if="it.sub" class="chev" />
        </button>
      </template>
    </div>

    <svg class="pointer" width="174" height="92" viewBox="0 0 174 92" aria-hidden="true">
      <path d="M1 78L16 61l3 5L171 2 24 73l1 6z" fill="#fb3a3d" />
    </svg>
  </div>
</template>

<style>
html,
body {
  height: 100%;
  overflow: hidden;
  background: #212830;
}
</style>

<style scoped>
.cad {
  position: relative;
  display: flex;
  flex-direction: column;
  height: 100vh;
  overflow: hidden;
  background: #212830;
  color: #d6dade;
  font: 10px/14px "Noto Sans", "Noto Sans CJK SC", sans-serif;
}
.cad * { box-sizing: border-box; }
.sprite { position: absolute; width: 0; height: 0; }
button, input, select {
  margin: 0;
  padding: 0;
  border: 0;
  background: none;
  color: inherit;
  font: inherit;
}
button { white-space: nowrap; }
.ic { display: block; width: 14px; height: 14px; flex: none; }
u { text-underline-offset: 1px; }

.caret {
  flex: none;
  border: 2px solid transparent;
  border-top-color: #cdd1d6;
  border-bottom: 0;
}
.caret.wide { border-width: 4px 3px 0; }
.caret.dim { border-top-color: #8d949d; }

/* title bar */
.title {
  display: flex;
  align-items: center;
  flex: none;
  height: 18px;
  background: #21252e;
}
.logo {
  display: flex;
  align-items: center;
  height: 14px;
  width: 31px;
  background: #99103a;
  color: #fff;
  font-size: 7px;
  font-weight: 700;
}
.logo b {
  width: 15px;
  margin-right: 1px;
  background: #e51b4c;
  font-size: 12px;
  text-align: right;
  padding-right: 2px;
}
.quick { display: flex; gap: 5px; margin-left: 7px; }
.history { display: flex; align-items: center; gap: 5px; margin: 0 4px 0 5px; }
.drop { position: relative; display: flex; align-items: center; background: #4a5364; }
.drop::after {
  content: "";
  margin-right: 3px;
  border: 3px solid transparent;
  border-top: 4px solid #d6dade;
  border-bottom: 0;
}
.drop select { appearance: none; flex: 1; min-width: 0; width: 0; outline: 0; line-height: 14px; }
.workspace { width: 140px; height: 16px; padding-left: 1px; gap: 2px; background: #343b48; }
.custom { display: flex; justify-content: center; width: 16px; }
.custom .caret { position: relative; }
.custom .caret::before {
  content: "";
  position: absolute;
  left: -3px;
  top: -6px;
  width: 6px;
  height: 1px;
  background: #cdd1d6;
}
.share { display: flex; align-items: center; gap: 4px; padding-left: 2px; color: #a4d4f5; }
h1 { flex: 1; margin: 0; text-align: center; font-size: 10px; font-weight: 400; }
.finder { display: flex; align-items: center; }
.arrow-right { border: 3px solid transparent; border-left: 4px solid #d6dade; border-right: 0; margin-right: 4px; }
.finder input { width: 141px; height: 15px; padding-left: 2px; background: #434b5b; outline: 0; }
.finder input::placeholder { color: #a3a9b3; font-style: italic; opacity: 1; }
.finder .ic { margin-left: 3px; }
.login { display: flex; align-items: center; gap: 2px; margin-left: 6px; }
.login .caret { margin-left: 45px; }
.services { display: flex; align-items: center; gap: 4px; margin-left: 8px; }
.services button { display: flex; align-items: center; gap: 3px; }
.services .help { margin-left: 2px; padding-left: 7px; border-left: 1px solid #3b414c; gap: 4px; }
.win { display: flex; gap: 8px; margin: 0 3px 0 54px; }
.win .ic { width: 12px; height: 12px; }

/* menu bar and tabs */
.menus { display: flex; align-items: center; flex: none; gap: 18px; height: 18px; padding-left: 11px; background: #21252e; color: #b9bdc4; border-bottom: 1px solid #2c323c; }
.win.doc { gap: 2px; margin: 0 1px 0 auto; }
.tabs { display: flex; flex: none; height: 19px; padding-left: 3px; background: #222731; color: #a9afb7; }
.tabs button { padding: 2px 8px 0 7px; }
.tabs .on { background: #3b4453; color: #eef0f2; }
.tabs .fold { display: flex; align-items: center; gap: 4px; margin-left: 6px; }
.chip { display: flex; align-items: center; justify-content: center; width: 12px; height: 6px; background: #e6e8ea; }
.chip i { border: 2px solid transparent; border-top: 0; border-bottom-color: #2c323c; }

/* ribbon */
.ribbon {
  display: grid;
  grid-template-columns: 168fr 151fr 100fr 199fr 64fr 159fr 53fr 60fr 69fr 57fr;
  flex: none;
  background: #3b4453;
  border-bottom: 2px solid #343b48;
}
.panel { position: relative; display: flex; flex-direction: column; min-width: 0; padding-top: 3px; border-right: 1px solid #2b323e; }
.tools { display: grid; height: 57px; padding-left: 3px; }
.draw { grid-template-columns: 30px 34px 29px 38px 1fr; }
.modify { grid-template-columns: 46px 48px 32px 1fr; }
.note { grid-template-columns: 34px 34px 1fr; padding-left: 4px; }
.layer { grid-template-columns: 30px 1fr; }
.block { grid-template-columns: 30px 1fr; }
.props { grid-template-columns: 30px 1fr; }
.group { grid-template-columns: 28px 1fr; padding-left: 2px; }
.util { grid-template-columns: 36px 1fr; }
.clip { grid-template-columns: 36px 1fr; }
.view { grid-template-columns: 1fr; padding: 0 8px 0 2px; }
.big { display: flex; flex-direction: column; align-items: center; justify-content: flex-start; text-align: center; line-height: 14px; }
.big .ic { width: 28px; height: 28px; margin-bottom: 2px; }
.big .caret { margin-top: 2px; }
.stack { display: grid; grid-template-rows: repeat(3, 19px); min-width: 0; padding-left: 2px; }
.stack > button { display: flex; align-items: center; gap: 4px; }
.stack .caret { margin-left: 3px; }
.draw .stack .caret, .note .stack .caret, .clip .stack .caret { margin-left: 0; }
.modify .stack .caret { margin-left: 1px; }
.name { display: flex; align-items: center; justify-content: center; gap: 6px; height: 19px; }
.names { display: flex; justify-content: center; align-items: center; gap: 7px; }
.names .ic, .launch .ic { width: 8px; height: 8px; }
.launch { position: absolute; right: 2px; bottom: 5px; }
.field { height: 16px; min-width: 0; flex: 1; align-self: center; }
.layer .field { margin-right: 1px; padding-left: 1px; gap: 1px; }
.layer .field .swatch { margin-right: 3px; }
.swatch { flex: none; width: 12px; height: 12px; margin: 0 3px 0 2px; background: #fff; }
.grid5 { display: grid; grid-template-columns: repeat(5, 19px); grid-auto-rows: 19px; align-items: center; padding-left: 1px; }
.prop { display: flex; align-items: center; gap: 3px; padding-right: 1px; }
.prop .field { padding-left: 2px; }
.props .stack { padding-left: 0; }
.rule { flex: none; width: 50px; height: 1px; margin: 0 2px; background: #d6dade; }
.block .stack, .group .stack, .util .stack, .clip .stack { padding-left: 3px; }
.group .stack > button { justify-content: center; margin-right: 1px; }
.pressed { background: #33536f; border: 1px solid #5f9cc9; }

/* drawing area */
.canvas { position: relative; flex: 1; min-height: 0; background: #212830; }
.viewlabel { display: flex; padding: 4px 2px; color: #dfe2e5; }
.navbar {
  position: absolute;
  top: 3px;
  right: 3px;
  display: flex;
  flex-direction: column;
  align-items: center;
  width: 26px;
  height: 190px;
  padding: 3px;
  border-radius: 3px;
  background: #5b6266;
}
.navbar button { display: flex; flex-direction: column; align-items: center; gap: 4px; margin-top: 2px; }
.navbar .dot + button { margin-top: 6px; }
.navbar .ic { width: 19px; height: 19px; }
.navbar .caret { border-top-color: #3b4145; margin-bottom: 3px; }
.dot { align-self: flex-end; flex: none; width: 5px; height: 5px; border: 1px solid #474e52; border-radius: 50%; }
.dot.end { margin-top: auto; }
.ucs { position: absolute; left: 3px; bottom: 4px; }

/* command line and input method bar */
.command { position: relative; display: flex; flex: none; height: 11px; padding-top: 3px; background: #3a4450; }
.grip {
  width: 14px;
  margin: 1px 3px 0;
  background:
    repeating-linear-gradient(0deg, transparent 0 2px, #3a4450 2px 3px),
    repeating-linear-gradient(90deg, #dfe2e5 0 2px, #3a4450 2px 3px);
}
.command input { flex: 1; min-width: 0; background: #c6c6c6; outline: 0; }
.marks { position: absolute; left: 20px; bottom: 0; }
.ime {
  position: absolute;
  right: 0;
  bottom: 0;
  display: flex;
  width: 124px;
  height: 9px;
  padding-left: 20px;
  background: linear-gradient(90deg, transparent 12px, #f4f6f8 12px);
  color: #30363f;
}
.ime > svg { flex: none; }
.ime span { flex: none; line-height: 9px; font-size: 9px; }
.ime .sogou { position: absolute; left: -8px; bottom: -6px; }

/* context menu */
.context {
  position: absolute;
  left: 395px;
  top: 179px;
  display: flex;
  flex-direction: column;
  width: 176px;
  height: 311px;
  padding: 1px;
  border: 1px solid #d3d3d3;
  background: #f1f1f1;
  color: #1b1b1b;
}
.context button { display: flex; align-items: center; flex: 1; min-height: 0; text-align: left; }
.context hr { flex: none; width: 148px; height: 1px; margin: 2px 1px 2px auto; border: 0; background: #d2d2d2; }
.context .active { background: #91c9f7; }
.context button:disabled { color: #8b8b8b; }
.gutter { width: 26px; padding-left: 3px; }
.text { flex: 1; }
.short { margin-right: 15px; color: #6d6d6d; }
.chev { width: 4px; height: 4px; margin-right: 9px; border: solid #555; border-width: 1px 1px 0 0; transform: rotate(45deg); }
.pointer { position: absolute; left: 555px; top: 399px; pointer-events: none; }
</style>
